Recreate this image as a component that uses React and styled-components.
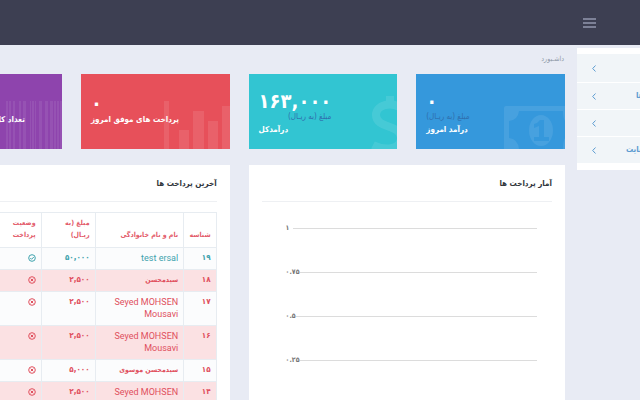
import React from "react";
import styled, { createGlobalStyle } from "styled-components";

const GlobalStyle = createGlobalStyle`
  * { box-sizing: border-box; }
  html, body { margin: 0; padding: 0; }
  body {
    background: #e8ebf4;
    font-family: "DejaVu Sans Condensed", "DejaVu Sans", sans-serif;
    font-size: 9px;
    line-height: 12px;
    overflow: hidden;
  }
  button { font: inherit; border: 0; padding: 0; background: none; cursor: pointer; }
`;

const TopBar = styled.header`
  display: flex;
  justify-content: flex-end;
  align-items: center;
  height: 45px;
  padding-right: 44px;
  background: #3d3f52;
`;

const MenuButton = styled.button`
  display: flex;
  flex-direction: column;
  gap: 2px;
  width: 13px;

  span { height: 2px; background: #7d8197; }
`;

const Layout = styled.div`
  display: grid;
  grid-template-columns: minmax(0, 1fr) 63px;
  column-gap: 12px;
`;

const Content = styled.main`
  direction: rtl;
  min-width: 0;
`;

const Breadcrumb = styled.nav`
  height: 29px;
  padding: 8px 1px 0 0;
  font-size: 7px;
  color: #8f99a8;
`;

const Cards = styled.section`
  display: grid;
  grid-template-columns: 149fr 149fr 149fr 62fr;
  column-gap: 19px;
`;

const Card = styled.article`
  position: relative;
  overflow: hidden;
  display: flex;
  flex-direction: column;
  align-items: ${(p) => (p.$cut ? "flex-start" : "flex-end")};
  justify-content: flex-end;
  height: 75px;
  padding: ${(p) => (p.$cut ? "0 37px 23px 0" : p.$note ? "0 0 13px 10px" : "0 0 23px 10px")};
  background: ${(p) => p.$color};
  color: #fff;
  white-space: nowrap;
`;

const Art = styled.svg`
  position: absolute;
  right: 0;
  bottom: 0;
`;

const Figures = styled.div`
  position: relative;
  display: flex;
  flex-direction: column;
`;

const Amount = styled.strong`
  direction: ltr;
  text-align: left;
  font-size: 20px;
  line-height: 20px;
`;

const Note = styled.small`
  font-size: 8px;
  line-height: 12px;
  color: #2f6fae;
`;

const CardTitle = styled.h2`
  position: relative;
  margin: 0;
  font-size: 8px;
  line-height: 13px;
`;

const Panels = styled.section`
  display: grid;
  grid-template-columns: 317fr 230fr;
  column-gap: 19px;
  margin-top: 16px;
`;

const Panel = styled.article`
  min-width: 0;
  min-height: 260px;
  padding: 0 ${(p) => (p.$cut ? "13px 0 0" : "13px")};
  background: #fff;
`;

const PanelTitle = styled.h3`
  margin: 0;
  height: 37px;
  padding-top: 12px;
  border-bottom: 1px solid #eef0f3;
  font-size: 8px;
  line-height: 13px;
  color: #2f353b;
`;

const Chart = styled.div`
  direction: ltr;
  padding: 16px 15px 0 24px;
`;

const Tick = styled.div`
  display: flex;
  align-items: center;
  height: 20px;
  margin-bottom: 24px;
  font-size: 7px;
  font-weight: bold;
  color: #777;

  span { min-width: 7px; }
  hr { flex: 1; margin: 0; border: 0; border-top: 1px solid #dcdcdc; }
`;

const Table = styled.table`
  width: 100%;
  margin-top: 10px;
  border-collapse: collapse;
  table-layout: fixed;
  color: #e35b6a;

  th, td {
    padding: 4px 5px 5px;
    border: 1px solid #e7ecf1;
    border-left: 0;
    text-align: right;
    vertical-align: top;
  }
  th { padding-bottom: 6px; font-size: 7px; vertical-align: bottom; }
`;

const Row = styled.tr`
  background: ${(p) => (p.$tint ? "#fbe1e3" : "#fbfcfd")};
  color: ${(p) => (p.$paid ? "#3fa3ad" : "#e0505e")};
`;

const NumberCell = styled.td`
  font-size: 8px;
  font-weight: bold;
`;

const NameCell = styled.td`
  direction: ${(p) => (p.$latin ? "ltr" : "rtl")};
  font-family: ${(p) => (p.$latin ? "Roboto, sans-serif" : "inherit")};
  font-size: ${(p) => (p.$latin ? "9px" : "7px")};
  font-weight: ${(p) => (p.$latin ? "normal" : "bold")};
`;

const StatusIcon = styled.svg`
  display: block;
  margin-top: 2px;
`;

const Sidebar = styled.aside`
  align-self: start;
  margin-top: 3px;
  padding: 6px 0;
  background: #fff;
  overflow: hidden;
`;

const SideLink = styled.a`
  display: flex;
  align-items: center;
  height: ${(p) => (p.$first ? "29px" : "27px")};
  padding-left: 15px;
  border-bottom: 1px solid #fff;
  background: #f1f5f8;
  color: #5b9bd1;
  font-size: 8px;
  font-weight: bold;
  text-decoration: none;
  white-space: nowrap;

  svg { flex: none; }
  span { margin-left: ${(p) => p.$gap}px; }
`;

function Status({ paid }) {
  return (
    <StatusIcon width="8" height="8" viewBox="0 0 16 16" fill="none" stroke="currentColor" strokeWidth="2"
      role="img" aria-label={paid ? "موفق" : "ناموفق"}>
      <circle cx="8" cy="8" r="6.6" />
      <path d={paid ? "M4.5 8l2.6 2.6L11.6 6" : "M5.3 5.3l5.4 5.4M10.7 5.3l-5.4 5.4"} />
    </StatusIcon>
  );
}

function Banknote() {
  return (
    <Art width="61" height="43" viewBox="0 0 61 43" fill="#fff" fillOpacity=".09" aria-hidden="true">
      <path d="M0 2Q0 0 2 0H61V5H15Q14 14 5 15V32Q14 33 15 43H0Z" />
      <path fillRule="evenodd" d="M37 9a12 15.500 0 0 1 0 31a12 15.500 0 0 1 0-31zM30 18v4l5-2v11h-5v4h15v-4h-5V14h-4q-2 3-6 4z" />
      <path d="M61 15q-2-3-2-10h2zM61 32q-2 3-2 11h2z" />
    </Art>
  );
}

function Dollar() {
  return (
    <Art width="26" height="54" viewBox="0 0 26 54" fill="none" stroke="#fff" strokeOpacity=".1" aria-hidden="true">
      <path strokeWidth="8" d="M19 1V6M30 13C20 6 5 10 5 20C5 34 30 29 30 43C30 56 12 55 2 50" />
    </Art>
  );
}

function Bars() {
  return (
    <Art width="66" height="48" viewBox="0 0 66 48" fill="#fff" fillOpacity=".1" aria-hidden="true">
      <path d="M0 0h5v48H0zM15 29h10v19H15zM29 10h11v38H29zM44 20h10v28H44zM58 5h8v43h-8z" />
    </Art>
  );
}

const STRIPES = [[0, 2], [3, 2], [7, 2], [13, 2], [17, 3], [24, 1], [26, 2], [29, 1], [33, 3], [39, 3], [44, 3], [48, 2], [51, 2], [54, 2]];

function Barcode() {
  return (
    <Art width="56" height="48" viewBox="0 0 56 48" fill="#fff" fillOpacity=".08" aria-hidden="true">
      {STRIPES.map(([x, w]) => <rect key={x} x={x} y="0" width={w} height="48" />)}
    </Art>
  );
}

const CARDS = [
  { color: "#3598dc", amount: "۰", note: "مبلغ (به ریـال)", title: "درآمد امروز", art: <Banknote /> },
  { color: "#32c5d2", amount: "۱۶۳,۰۰۰", note: "مبلغ (به ریـال)", title: "درآمدکل", art: <Dollar /> },
  { color: "#e7505a", amount: "۰", title: "پرداخت های موفق امروز", art: <Bars /> },
  { color: "#8e44ad", title: "تعداد کل پرداخت ها", art: <Barcode />, cut: true },
];

const ROWS = [
  { id: "۱۹", name: "test ersal", latin: true, amount: "۵۰,۰۰۰", paid: true },
  { id: "۱۸", name: "سیدمحسن", amount: "۲,۵۰۰" },
  { id: "۱۷", name: "Seyed MOHSEN Mousavi", latin: true, amount: "۲,۵۰۰" },
  { id: "۱۶", name: "Seyed MOHSEN Mousavi", latin: true, amount: "۲,۵۰۰" },
  { id: "۱۵", name: "سیدمحسن موسوی", amount: "۵,۰۰۰" },
  { id: "۱۴", name: "Seyed MOHSEN Mousavi", latin: true, amount: "۲,۵۰۰" },
];

const LINKS = [{ text: "" }, { text: "ها", gap: 40 }, { text: "" }, { text: "سایت", gap: 30 }];

export default function App() {
  return (
    <>
      <GlobalStyle />
      <TopBar>
        <MenuButton aria-label="منو"><span /><span /><span /></MenuButton>
      </TopBar>
      <Layout>
        <Content>
          <Breadcrumb>داشـبورد</Breadcrumb>
          <Cards>
            {CARDS.map((c) => (
              <Card key={c.title} $color={c.color} $note={c.note} $cut={c.cut}>
                {c.art}
                {c.amount && (
                  <Figures>
                    <Amount>{c.amount}</Amount>
                    {c.note && <Note>{c.note}</Note>}
                  </Figures>
                )}
                <CardTitle>{c.title}</CardTitle>
              </Card>
            ))}
          </Cards>
          <Panels>
            <Panel>
              <PanelTitle>آمار پرداخت ها</PanelTitle>
              <Chart>
                {["۱", "۰.۷۵", "۰.۵", "۰.۲۵"].map((t) => (
                  <Tick key={t}><span>{t}</span><hr /></Tick>
                ))}
              </Chart>
            </Panel>
            <Panel $cut>
              <PanelTitle>آخرین پرداخت ها</PanelTitle>
              <Table>
                <colgroup>
                  <col style={{ width: "15%" }} />
                  <col style={{ width: "41%" }} />
                  <col style={{ width: "25%" }} />
                  <col />
                </colgroup>
                <thead>
                  <tr>
                    <th scope="col">شناسه</th>
                    <th scope="col">نام و نام خانوادگی</th>
                    <th scope="col">مبلغ (به<br />ریـال)</th>
                    <th scope="col">وضعیت<br />پرداخت</th>
                  </tr>
                </thead>
                <tbody>
                  {ROWS.map((r, i) => (
                    <Row key={r.id} $paid={r.paid} $tint={i % 2 === 1}>
                      <NumberCell>{r.id}</NumberCell>
                      <NameCell $latin={r.latin}>{r.name}</NameCell>
                      <NumberCell>{r.amount}</NumberCell>
                      <td><Status paid={r.paid} /></td>
                    </Row>
                  ))}
                </tbody>
              </Table>
            </Panel>
          </Panels>
        </Content>
        <Sidebar>
          {LINKS.map((l, i) => (
            <SideLink key={i} href="#" $first={i === 0} $gap={l.gap || 0}>
              <svg width="4" height="7" viewBox="0 0 4 7" fill="none" stroke="currentColor" aria-hidden="true">
                <path d="M3.500 .5L.7 3.500l2.800 3" />
              </svg>
              {l.text && <span>{l.text}</span>}
            </SideLink>
          ))}
        </Sidebar>
      </Layout>
    </>
  );
}
